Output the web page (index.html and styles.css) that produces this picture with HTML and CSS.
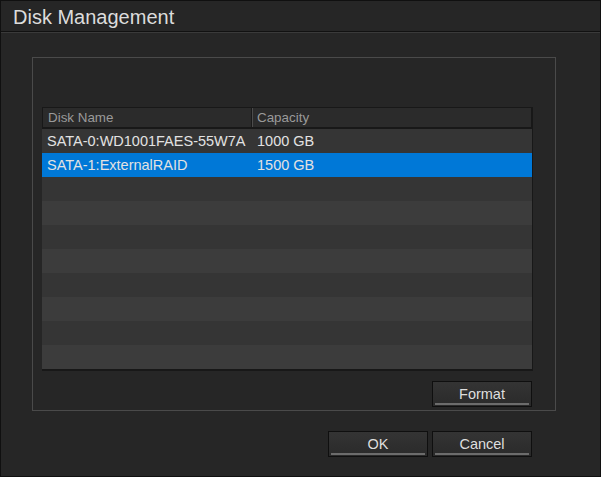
FILE: index.html
```
<!DOCTYPE html>
<html>
<head>
<meta charset="utf-8">
<link rel="stylesheet" href="styles.css">
</head>
<body>
<div class="window">
  <div class="titlebar">Disk Management</div>
  <div class="content">
    <div class="group">
      <div class="table">
        <div class="thead">
          <div class="th c1">Disk Name</div>
          <div class="th c2">Capacity</div>
        </div>
        <div class="row odd"><div class="td c1">SATA-0:WD1001FAES-55W7A</div><div class="td c2">1000 GB</div></div>
        <div class="row sel"><div class="td c1">SATA-1:ExternalRAID</div><div class="td c2">1500 GB</div></div>
        <div class="row odd"></div>
        <div class="row even"></div>
        <div class="row odd"></div>
        <div class="row even"></div>
        <div class="row odd"></div>
        <div class="row even"></div>
        <div class="row odd"></div>
        <div class="row even"></div>
      </div>
      <div class="group-actions">
        <button class="btn">Format</button>
      </div>
    </div>
    <div class="actions">
      <button class="btn">OK</button>
      <button class="btn">Cancel</button>
    </div>
  </div>
</div>
</body>
</html>
```
FILE: styles.css
```
html, body {
  margin: 0;
  padding: 0;
  background: #262626;
}
body {
  font-family: "Liberation Sans", Arial, sans-serif;
}
.window {
  width: 601px;
  height: 477px;
  box-sizing: border-box;
  border: 1px solid #101010;
  background: #262626;
  display: flex;
  flex-direction: column;
}
.titlebar {
  height: 30px;
  line-height: 32px;
  padding-left: 12px;
  font-size: 20px;
  color: #dcdcdc;
  background: #262626;
  border-bottom: 1px solid #111;
  box-shadow: 0 1px 0 #3a3a3a;
}
.content {
  padding: 25px 0 0 31px;
  display: flex;
  flex-direction: column;
}
.group {
  width: 524px;
  height: 354px;
  box-sizing: border-box;
  border: 1px solid #4a4a4a;
  padding: 49px 23px 0 9px;
  display: flex;
  flex-direction: column;
}
.table {
  border-right: 1px solid #181818;
  border-bottom: 2px solid #181818;
  box-sizing: border-box;
  width: 491px;
}
.thead {
  display: flex;
  height: 22px;
  box-sizing: border-box;
  border: 1px solid #181818;
  border-bottom: 2px solid #181818;
  background: #2b2b2b;
}
.th {
  font-size: 13.4px;
  color: #9a9a9a;
  line-height: 19px;
  padding-left: 5px;
  box-sizing: border-box;
}
.th.c1 {
  width: 209px;
  border-right: 1px solid #1a1a1a;
  box-shadow: 1px 0 0 #4c4c4c;
}
.th.c2 {
  flex: 1;
}
.row {
  display: flex;
  height: 24px;
}
.row.odd { background: #353535; }
.row.even { background: #3c3c3c; }
.row.sel { background: #0078d7; }
.td {
  font-size: 14.5px;
  color: #e2e2e2;
  line-height: 24px;
  padding-left: 5px;
  box-sizing: border-box;
}
.td.c1 { width: 210px; }
.td.c2 { flex: 1; }
.group-actions {
  display: flex;
  justify-content: flex-end;
  margin-top: 10px;
  width: 490px;
}
.actions {
  display: flex;
  gap: 4px;
  margin-top: 20px;
  padding-left: 296px;
}
.btn {
  position: relative;
  width: 100px;
  height: 26px;
  box-sizing: border-box;
  border: 1px solid #0f0f0f;
  background: linear-gradient(#343434, #2a2a2a);
  color: #dedede;
  font-family: "Liberation Sans", Arial, sans-serif;
  font-size: 14.5px;
  padding: 0 0 1px 0;
  margin: 0;
  cursor: default;
}
.btn::after {
  content: "";
  position: absolute;
  left: 2px;
  right: 2px;
  bottom: 1px;
  height: 2px;
  background: #6c6c6c;
}
```
